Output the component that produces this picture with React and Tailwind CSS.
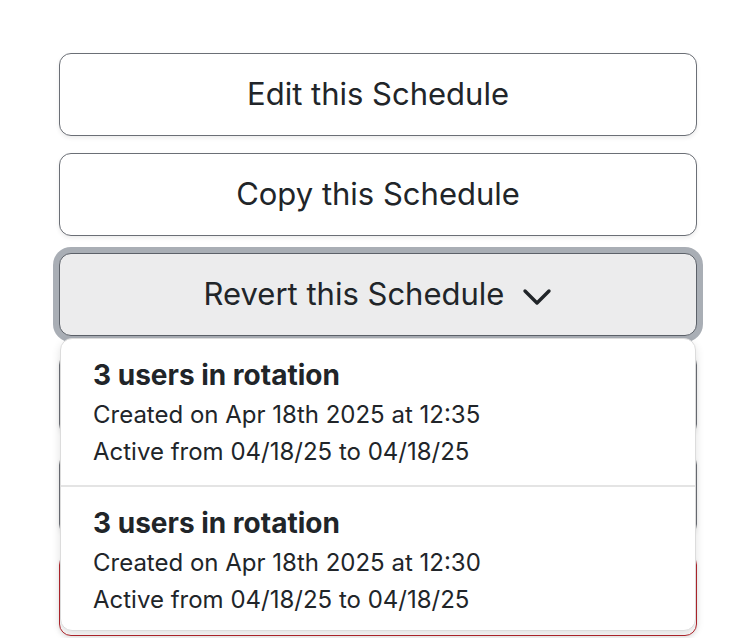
import React from 'react';

const font = { fontFamily: 'Inter, "Noto Sans", "Liberation Sans", sans-serif' };

const versions = [
    { id: 1, title: '3 users in rotation', created: 'Created on Apr 18th 2025 at 12:35', active: 'Active from 04/18/25 to 04/18/25' },
    { id: 2, title: '3 users in rotation', created: 'Created on Apr 18th 2025 at 12:30', active: 'Active from 04/18/25 to 04/18/25' },
];

const Chevron = () => (
    <svg width="30" height="18" viewBox="0 0 30 18" fill="none" className="ml-[18px] mt-[4px]">
        <path d="M3 3 L15 15 L27 3" stroke="#212529" strokeWidth="3.4" strokeLinecap="round" strokeLinejoin="round" />
    </svg>
);

const ActionButton = ({ children, tone = 'default', active = false }) => {
    const base = 'w-full h-[83px] rounded-[12px] border-[1.5px] flex items-center justify-center text-[31px] text-[#212529] shadow-[0_2px_4px_rgba(0,0,0,0.08)]';
    const toneClass = tone === 'danger'
        ? 'border-[#b3262d] border-2 bg-white'
        : active
            ? 'border-[#5c6169] bg-[#ececed] ring-[6px] ring-[#a9aeb5]'
            : 'border-[#6b6f76] bg-white';
    return (
        <button className={`${base} ${toneClass}`}>
            {children}
        </button>
    );
};

export default function App() {
    return (
        <div className="min-h-[638px] bg-white pt-[53px] px-[59px] pr-[45px]" style={font}>
            <div className="flex flex-col gap-[17px] w-[638px]">
                <ActionButton>Edit this Schedule</ActionButton>
                <ActionButton>Copy this Schedule</ActionButton>
                <div className="relative z-10">
                    <ActionButton active>
                        <span>Revert this Schedule</span>
                        <Chevron />
                    </ActionButton>
                    {/* Dropdown: previous versions */}
                    <div className="absolute left-[1px] right-[1px] top-[85px] bg-white border border-[#dcdcdc] rounded-[12px] shadow-[0_4px_10px_rgba(0,0,0,0.12)] overflow-hidden">
                        {versions.map((v, i) => (
                            <div
                                key={v.id}
                                className={`px-[32px] pt-[17px] text-[#212529] ${i > 0 ? 'border-t-2 border-[#e4e4e4] pb-[13px]' : 'pb-[16px]'}`}
                            >
                                <div className="text-[28px] font-bold leading-[38px]">{v.title}</div>
                                <div className="text-[24px] leading-[38px] mt-[2px]">{v.created}</div>
                                <div className="text-[24px] leading-[35px]">{v.active}</div>
                            </div>
                        ))}
                    </div>
                </div>
                <ActionButton>Export this Schedule</ActionButton>
                <ActionButton>Archive this Schedule</ActionButton>
                <ActionButton tone="danger">Delete this Schedule</ActionButton>
            </div>
        </div>
    );
}
